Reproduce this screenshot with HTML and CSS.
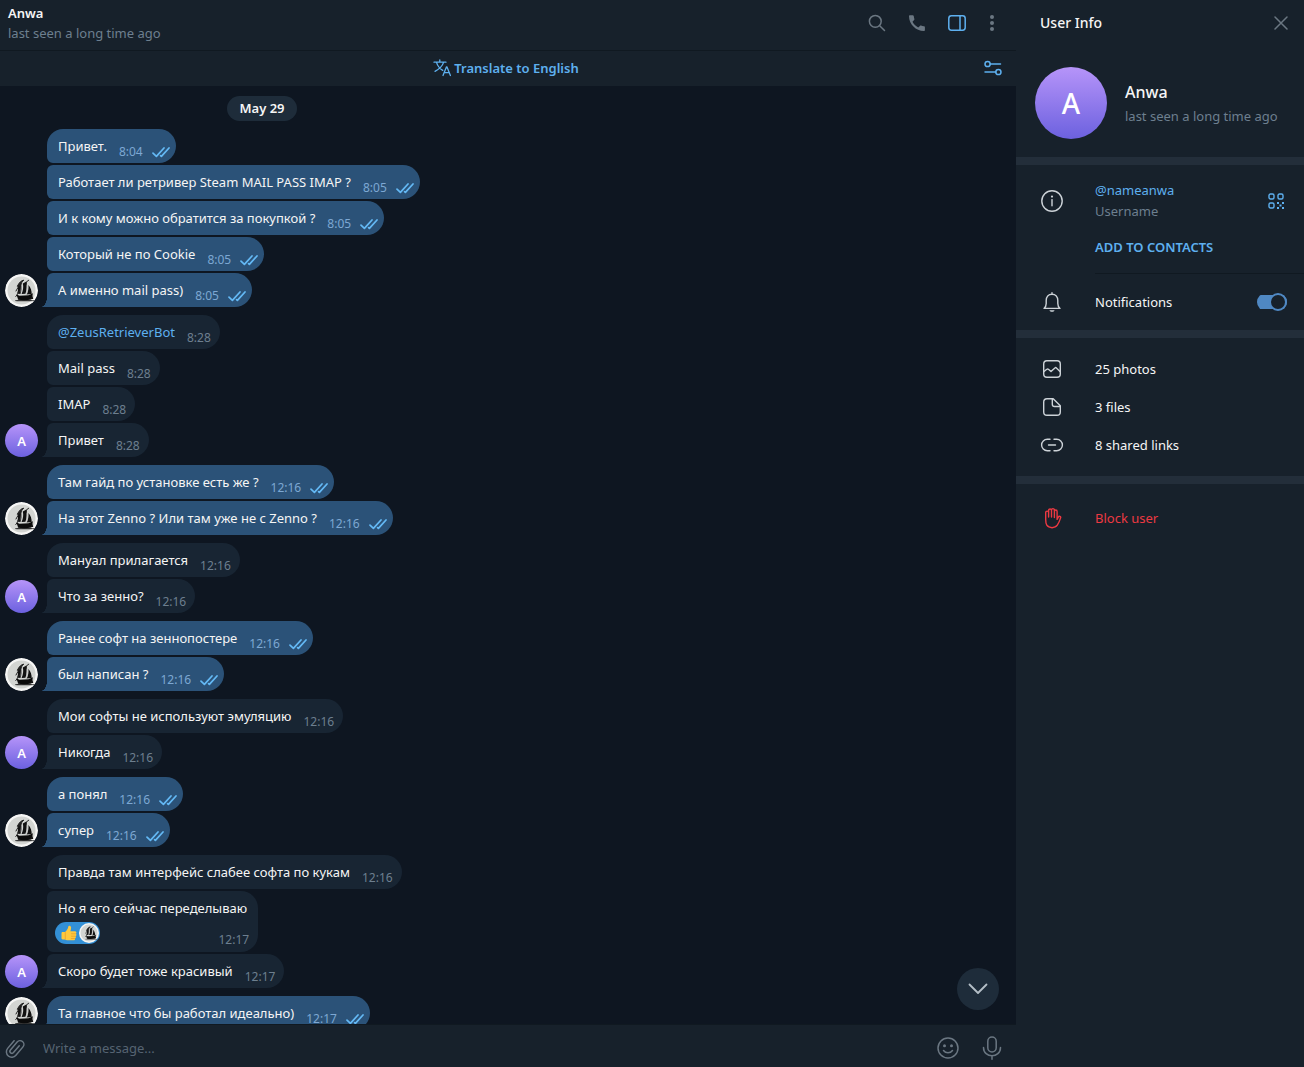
FILE: index.html
```html
<!DOCTYPE html>
<html lang="en">
<head>
<meta charset="utf-8">
<meta name="viewport" content="width=device-width, initial-scale=1">
<title>Anwa</title>
<link rel="stylesheet" href="styles.css">
</head>
<body>
<svg class="sprite" aria-hidden="true">
  <symbol id="ticks" viewBox="0 0 18 12"><path d="M1 7.2 4.4 10.400 12 2M8.600 9.600 9.400 10.400 17 2" fill="none" stroke="currentColor" stroke-width="1.700" stroke-linecap="round" stroke-linejoin="round"/></symbol>
  <symbol id="ship" viewBox="0 0 33 33">
    <circle cx="16.500" cy="16.500" r="16.500" fill="#f6f6f5"/>
    <circle cx="16.500" cy="16.500" r="14" fill="#d3d5d2"/>
    <path d="M10 26.500c4-1 9-1.200 16-.6 1.500.2 4 .4 5 .9-5 .6-15 .8-21 .1z" fill="#333"/>
    <path d="M11.500 20.500l3 1.200 9-.4 4.500-2-1.800 6.200c-4 1-9 1-13 .3z" fill="#0b0b0b"/>
    <path d="M12 19.500c1.500-3 1-6 .6-8l3.800-2.700c1 4 .2 8-1 11.200zM16.600 20c1.600-4 2-7 1.200-10.500l4-2.200c.2 4.200 0 9-1.400 12.500zM21.600 20.500c1.600-3 2.200-6 1.800-9.500 2.400 2.600 3.400 6 3.300 9zM24.500 25c1.200-1 2.500-2 2.500-4.500l1.300 4.500z" fill="#111"/>
    <path d="M12.500 12c1.500-3.500 3.800-5.500 6.300-5.800-1.800 1.500-2.600 3-3.400 5zM11 17l2-3.500M10.800 22.500l5-7M22 7.500l1.600-1.200" fill="#222" stroke="#222" stroke-width="1"/>
    <path d="M16.500 11l-.5 7M22 11v8" stroke="#bbb" stroke-width=".7"/>
  </symbol>
</svg>
<div class="app">
  <main class="chat">
    <header class="chat-head">
      <div class="chat-title">
        <h1>Anwa</h1>
        <p class="muted">last seen a long time ago</p>
      </div>
      <nav class="tools">
        <button class="tool" aria-label="Search"><svg width="18" height="18" viewBox="0 0 18 18"><circle cx="7.300" cy="7.300" r="5.900"/><path d="M11.700 11.700 16.500 16.500"/></svg></button>
        <button class="tool" aria-label="Call"><svg class="solid" width="18" height="18" viewBox="0 0 18 18"><path d="M2 1.200h2.700c.6 0 1 .4 1.100 1 .1 1 .3 1.900.6 2.800.1.400 0 .8-.3 1.100L4.500 7.800c1.200 2.300 3.300 4.400 5.700 5.700l1.700-1.600c.3-.3.700-.4 1.100-.3.900.3 1.900.5 2.900.6.600 0 1 .5 1 1v2.700c0 .6-.5 1-1 1C7.800 16.900 1.100 10.200 1 2.200c0-.6.400-1 1-1z"/></svg></button>
        <button class="tool tool-active" aria-label="Toggle user info"><svg width="18" height="16" viewBox="0 0 18 16"><rect x=".8" y=".8" width="16.400" height="14.400" rx="2.600"/><path d="M12 1v14"/></svg></button>
        <button class="tool tool-narrow" aria-label="More"><svg class="solid" width="6" height="18" viewBox="0 0 6 18"><circle cx="3" cy="3" r="2"/><circle cx="3" cy="9" r="2"/><circle cx="3" cy="15" r="2"/></svg></button>
      </nav>
    </header>
    <div class="translate">
      <button class="translate-main">
        <svg width="18" height="18" viewBox="0 0 18 18"><path d="M1 3.200h12M6.800 1v2.200M3.500 3.400c1 3.300 3.300 6.200 6.200 8M10.600 3.400C9.400 7 6.500 10 2 12.300M10 16.500 13.500 7.800h.4l3.500 8.700M11.200 13.700h5"/></svg>
        Translate to English
      </button>
      <button class="tool tool-active tool-narrow translate-options" aria-label="Translation settings"><svg width="18" height="16" viewBox="0 0 18 16"><circle cx="3.600" cy="4" r="2.600"/><path d="M6.200 4H16.500M1 12h10.800"/><circle cx="14.400" cy="12" r="2.600"/></svg></button>
    </div>
    <section class="history" aria-label="Messages">
      <div class="column">
        <time class="day">May 29</time>

        <div class="group mine">
          <svg class="avatar"><use href="#ship"/></svg>
          <div class="bubble"><p>Привет.</p><span class="meta">8:04<svg><use href="#ticks"/></svg></span></div>
          <div class="bubble"><p>Работает ли ретривер Steam MAIL PASS IMAP ?</p><span class="meta">8:05<svg><use href="#ticks"/></svg></span></div>
          <div class="bubble"><p>И к кому можно обратится за покупкой ?</p><span class="meta">8:05<svg><use href="#ticks"/></svg></span></div>
          <div class="bubble"><p>Который не по Cookie</p><span class="meta">8:05<svg><use href="#ticks"/></svg></span></div>
          <div class="bubble"><p>А именно mail pass)</p><span class="meta">8:05<svg><use href="#ticks"/></svg></span></div>
        </div>

        <div class="group">
          <span class="avatar initial">A</span>
          <div class="bubble"><p><a href="#bot">@ZeusRetrieverBot</a></p><span class="meta">8:28</span></div>
          <div class="bubble"><p>Mail pass</p><span class="meta">8:28</span></div>
          <div class="bubble"><p>IMAP</p><span class="meta">8:28</span></div>
          <div class="bubble"><p>Привет</p><span class="meta">8:28</span></div>
        </div>

        <div class="group mine">
          <svg class="avatar"><use href="#ship"/></svg>
          <div class="bubble"><p>Там гайд по установке есть же ?</p><span class="meta">12:16<svg><use href="#ticks"/></svg></span></div>
          <div class="bubble"><p>На этот Zenno ? Или там уже не с Zenno ?</p><span class="meta">12:16<svg><use href="#ticks"/></svg></span></div>
        </div>

        <div class="group">
          <span class="avatar initial">A</span>
          <div class="bubble"><p>Мануал прилагается</p><span class="meta">12:16</span></div>
          <div class="bubble"><p>Что за зенно?</p><span class="meta">12:16</span></div>
        </div>

        <div class="group mine">
          <svg class="avatar"><use href="#ship"/></svg>
          <div class="bubble"><p>Ранее софт на зеннопостере</p><span class="meta">12:16<svg><use href="#ticks"/></svg></span></div>
          <div class="bubble"><p>был написан ?</p><span class="meta">12:16<svg><use href="#ticks"/></svg></span></div>
        </div>

        <div class="group">
          <span class="avatar initial">A</span>
          <div class="bubble"><p>Мои софты не используют эмуляцию</p><span class="meta">12:16</span></div>
          <div class="bubble"><p>Никогда</p><span class="meta">12:16</span></div>
        </div>

        <div class="group mine">
          <svg class="avatar"><use href="#ship"/></svg>
          <div class="bubble"><p>а понял</p><span class="meta">12:16<svg><use href="#ticks"/></svg></span></div>
          <div class="bubble"><p>супер</p><span class="meta">12:16<svg><use href="#ticks"/></svg></span></div>
        </div>

        <div class="group">
          <span class="avatar initial">A</span>
          <div class="bubble"><p>Правда там интерфейс слабее софта по кукам</p><span class="meta">12:16</span></div>
          <div class="bubble bubble-stacked">
            <p>Но я его сейчас переделываю</p>
            <div class="reactions">
              <button class="reaction" aria-label="Thumbs up">
                <svg width="18" height="18" viewBox="0 0 18 18"><path d="M1.500 9.200c0-.8.5-1.200 1.200-1.200H5c1.700-1.300 3-3.200 3.300-5.500.2-1.300 2.600-1.200 2.800.8.100 1.400-.3 2.700-.7 3.900h4.300c2 0 2.200 2 .9 2.500 1.300.5 1.100 2.300-.2 2.500.9.600.6 2-.5 2.200.5.900-.1 1.900-1.300 1.900H7.800c-1.300 0-2-.5-2.800-.9H2.700c-.7 0-1.200-.4-1.200-1.100z" fill="#ffc83d"/><path d="M11.500 9.800h3.800M11.500 12.200h3.500M11.300 14.500h3.200M5.300 8.500v6.300" fill="none" stroke="#e59b25" stroke-width=".7"/></svg>
                <svg width="20" height="20"><use href="#ship"/></svg>
              </button>
              <span class="time">12:17</span>
            </div>
          </div>
          <div class="bubble"><p>Скоро будет тоже красивый</p><span class="meta">12:17</span></div>
        </div>

        <div class="group mine">
          <svg class="avatar"><use href="#ship"/></svg>
          <div class="bubble"><p>Та главное что бы работал идеально)</p><span class="meta">12:17<svg><use href="#ticks"/></svg></span></div>
        </div>
      </div>
      <button class="to-bottom" aria-label="Scroll to bottom"><svg width="20" height="12" viewBox="0 0 20 12"><path d="M1.500 1.500 10 10l8.500-8.500"/></svg></button>
    </section>
    <footer class="composer">
      <button class="tool tool-narrow" aria-label="Attach"><svg width="22" height="24" viewBox="-11 -12 22 24"><path transform="rotate(40)" d="M-5.400-5V5a5.400 5.400 0 0 0 10.800 0V-6a3.800 3.800 0 0 0-7.600 0V4.500a2 2 0 0 0 4 0V-4.500"/></svg></button>
      <input type="text" placeholder="Write a message..." aria-label="Message">
      <button class="tool" aria-label="Emoji"><svg width="22" height="22" viewBox="0 0 22 22"><circle cx="11" cy="11" r="10"/><circle class="dot" cx="7.500" cy="8.800" r="1.500"/><circle class="dot" cx="14.500" cy="8.800" r="1.500"/><path d="M6.500 13.500c2.200 3 6.800 3 9 0"/></svg></button>
      <button class="tool tool-mic" aria-label="Record voice message"><svg width="20" height="24" viewBox="0 0 20 24"><rect x="5.800" y="1" width="8.400" height="15" rx="4.200"/><path d="M1.500 11.500c0 11 17 11 17 0M10 20v3.200"/></svg></button>
    </footer>
  </main>

  <aside class="info">
    <header class="info-head">
      <h2>User Info</h2>
      <button class="tool tool-narrow" aria-label="Close"><svg width="14" height="14" viewBox="0 0 14 14"><path d="M1 1l12 12M13 1 1 13"/></svg></button>
    </header>
    <div class="profile">
      <span class="portrait">A</span>
      <div>
        <h3>Anwa</h3>
        <p class="muted">last seen a long time ago</p>
      </div>
    </div>
    <section class="block">
      <div class="row row-user">
        <svg width="24" height="24" viewBox="0 0 24 24"><circle cx="12" cy="12" r="10.200"/><path d="M12 10.600v6.200"/><circle class="dot" cx="12" cy="7.600" r="1.100"/></svg>
        <div>
          <a href="#username">@nameanwa</a>
          <p class="muted">Username</p>
        </div>
        <button class="tool tool-active qr" aria-label="QR code"><svg width="16" height="16" viewBox="0 0 16 16"><rect x="1" y="1" width="5" height="5" rx="1.500"/><rect x="10" y="1" width="5" height="5" rx="1.500"/><rect x="1" y="10" width="5" height="5" rx="1.500"/><path class="dot" d="M9 9h2v2H9zM14 9h2v2h-2zM11.500 11.500h2v2h-2zM9 14h2v2H9zM14 14h2v2h-2z"/></svg></button>
      </div>
      <button class="add">ADD TO CONTACTS</button>
      <label class="row row-notify">
        <svg width="24" height="24" viewBox="0 0 24 24"><path d="M4 18.400h16c-1.700-1.500-2.200-3-2.200-5v-2.900c0-3.500-2.200-6.300-5.800-6.300s-5.800 2.800-5.800 6.300v2.900c0 2-.5 3.500-2.200 5zM12 2.800v1.400"/><path class="dot" d="M9.500 20.200h5c-.5 2-4.500 2-5 0z"/></svg>
        <span>Notifications</span>
        <input class="switch" type="checkbox" checked>
      </label>
    </section>
    <section class="block block-media">
      <button class="row"><svg width="24" height="24" viewBox="0 0 24 24"><rect x="3.700" y="3.700" width="16.600" height="16.600" rx="3.200"/><path d="M4 14.500l2.800-2.200c.6-.5 1-.4 1.600 0l2.600 2.200 3.900-3.600c.5-.5 1-.5 1.500 0l3.600 3.500"/></svg>25 photos</button>
      <button class="row"><svg width="24" height="24" viewBox="0 0 24 24"><path d="M7 3.700h6.200l7.100 7V17c0 2-1.300 3.300-3.300 3.300H7c-2 0-3.300-1.300-3.300-3.300V7c0-2 1.300-3.300 3.300-3.300zM12.300 4v5.300c0 1.400.8 2.200 2.200 2.200h5.500"/></svg>3 files</button>
      <button class="row"><svg width="24" height="24" viewBox="0 0 24 24"><path d="M10 6.300H7.300a5.700 5.700 0 0 0 0 11.400H10M14 6.300h2.700a5.700 5.700 0 0 1 0 11.400H14M8.500 12h7"/></svg>8 shared links</button>
    </section>
    <section class="block block-danger">
      <button class="row danger"><svg width="24" height="24" viewBox="0 0 24 24"><path d="M5.700 13V6.600c0-1.900 2.900-1.900 2.900 0V11M8.600 6.600V4.400c0-1.900 2.900-1.900 2.900 0V11M11.500 4.400c0-2.400 2.900-2.400 2.900 0V11.500M14.400 5.400c0-1.800 2.700-1.800 2.700 0v8l1.200-2.300c.8-1.500 2.800-.8 2.300.8-.8 2.500-1.900 5.200-3.300 7.300-2.300 3.300-8.300 3.300-10.500 0-1.200-1.800-1.100-3.900-1.100-6.200"/></svg>Block user</button>
    </section>
  </aside>
</div>
</body>
</html>
```

FILE: styles.css
```css
:root {
  --panel: #17212b;
  --bg: #0e1621;
  --line: #101921;
  --band: #232e3a;
  --incoming: #182533;
  --outgoing: #2b5278;
  --text: #f5f5f5;
  --muted: #6d7f8f;
  --icon: #6b7782;
  --accent: #5eb0ef;
}

*, *::before { box-sizing: border-box; }

body {
  margin: 0;
  background: var(--bg);
  color: var(--text);
  font: 13px/20px "Noto Sans", "Open Sans", sans-serif;
}

h1, h2, h3, p { margin: 0; font-size: 13px; font-weight: 600; }
p { font-weight: 400; }
a { color: var(--accent); text-decoration: none; }

button {
  padding: 0;
  border: 0;
  background: none;
  color: inherit;
  font: inherit;
  text-align: left;
  cursor: pointer;
}

svg {
  flex: none;
  fill: none;
  stroke: currentColor;
  stroke-width: 1.5;
  stroke-linecap: round;
  stroke-linejoin: round;
}

.sprite { display: none; }
.solid, .dot { fill: currentColor; stroke: none; }
.muted { color: var(--muted); }

.app {
  display: grid;
  grid-template-columns: minmax(0, 1fr) 288px;
  height: 100vh;
}

.chat {
  display: flex;
  flex-direction: column;
  min-height: 0;
}

.chat-head {
  display: flex;
  align-items: center;
  justify-content: space-between;
  padding: 3px 9px 7px 8px;
  background: var(--panel);
  border-bottom: 1px solid var(--line);
}

.tools { display: flex; }

.tool {
  display: flex;
  align-items: center;
  justify-content: center;
  width: 40px;
  height: 32px;
  color: var(--icon);
}

.tool-active { color: var(--accent); }
.tool-narrow { width: 30px; }

.translate {
  display: grid;
  grid-template-columns: 30px 1fr 30px;
  align-items: center;
  height: 35px;
  padding: 0 8px 2px 4px;
  background: var(--panel);
}

.translate-main {
  display: flex;
  grid-column: 2;
  align-items: center;
  justify-content: center;
  gap: 3px;
  color: var(--accent);
  font-weight: 600;
}

.translate-main svg { stroke-width: 1.300; }

.history {
  position: relative;
  flex: 1;
  min-height: 0;
  overflow: hidden;
}

.column {
  display: flex;
  flex-direction: column;
  gap: 8px;
  max-width: 524px;
  padding-top: 10px;
}

.day {
  align-self: center;
  padding: 2px 12px 3px;
  border-radius: 13px;
  background: #1e2c3a;
  font-weight: 600;
}

.group {
  position: relative;
  display: flex;
  flex-direction: column;
  align-items: flex-start;
  gap: 2px;
  padding-left: 47px;
}

.avatar {
  position: absolute;
  bottom: 0;
  left: 5px;
  width: 33px;
  height: 33px;
  border-radius: 50%;
}

.avatar, .reaction svg { stroke: none; }

.initial, .portrait {
  display: flex;
  align-items: center;
  justify-content: center;
  border-radius: 50%;
  background: linear-gradient(#b694f9, #6c61df);
  color: #fff;
  font-weight: 600;
}

.bubble {
  position: relative;
  display: flex;
  align-items: center;
  gap: 12px;
  min-height: 34px;
  padding: 0 9px 0 11px;
  border-radius: 6px 17px 17px 6px;
  background: var(--incoming);
}

.mine .bubble {
  padding-right: 6px;
  background: var(--outgoing);
}

.group .avatar + .bubble { border-top-left-radius: 16px; }
.group .bubble:last-child { border-bottom-left-radius: 0; }

.bubble:last-child::before {
  content: "";
  position: absolute;
  bottom: 0;
  left: -6px;
  width: 6px;
  height: 10px;
  background: radial-gradient(ellipse 6px 10px at 0 0, transparent 96%, var(--incoming) 100%);
}

.mine .bubble:last-child::before {
  background: radial-gradient(ellipse 6px 10px at 0 0, transparent 96%, var(--outgoing) 100%);
}

.meta, .time {
  color: #6d7f8f;
  font-size: 12px;
  line-height: 16px;
}

.meta {
  display: flex;
  align-items: center;
  gap: 9px;
  padding-top: 11px;
  line-height: 12px;
}

.mine .meta { color: #7da8d3; }
.meta svg { width: 18px; height: 12px; color: #64b9f5; }

.bubble-stacked {
  flex-direction: column;
  align-items: stretch;
  gap: 4px;
  padding: 7px 11px 4px;
}

.reactions {
  display: flex;
  align-items: flex-end;
  justify-content: space-between;
  height: 26px;
  margin: 0 -2px 0 -3px;
}

.reaction {
  display: flex;
  align-items: center;
  align-self: flex-start;
  gap: 1px;
  height: 22px;
  padding: 0 1px 0 5px;
  border-radius: 11px;
  background: #3390d6;
}

.to-bottom {
  position: absolute;
  right: 17px;
  bottom: 14px;
  display: flex;
  align-items: center;
  justify-content: center;
  width: 42px;
  height: 42px;
  border-radius: 50%;
  background: #1e2c3a;
  color: #b4bec7;
}

.to-bottom svg { stroke-width: 1.800; }

.composer {
  display: flex;
  align-items: center;
  height: 43px;
  padding-top: 3px;
  background: var(--panel);
  border-top: 1px solid var(--line);
}

.composer input {
  flex: 1;
  min-width: 0;
  padding: 0 13px;
  border: 0;
  outline: 0;
  background: none;
  color: var(--text);
  font: inherit;
}

.composer input::placeholder { color: #566472; opacity: 1; }
.tool-mic { width: 48px; }

.info {
  overflow: hidden;
  background: var(--panel);
}

.info-head {
  display: flex;
  align-items: center;
  justify-content: space-between;
  height: 46px;
  padding: 0 8px 0 24px;
}

.info-head h2 { font-size: 14px; font-weight: 500; }

.profile {
  display: flex;
  align-items: center;
  gap: 18px;
  padding: 21px 19px 18px;
}

.profile h3 { font-size: 16px; font-weight: 500; line-height: 24px; }
.profile p { padding-top: 2px; }

.portrait {
  width: 72px;
  height: 72px;
  font-size: 28px;
  font-weight: 500;
}

.block { border-top: 8px solid var(--band); }
.block-media { padding: 12px 0; }
.block-danger { padding-top: 15px; }

.row {
  display: grid;
  grid-template-columns: 24px 1fr auto;
  align-items: center;
  column-gap: 31px;
  width: 100%;
  min-height: 38px;
  padding: 0 17px 0 24px;
}

.row svg { stroke-width: 1.400; }
.row > svg { color: #cdd3d8; }
.row-user { padding-top: 15px; }
.row-user p { padding-top: 1px; }
.qr { width: 22px; }

.add {
  display: block;
  margin: 16px 0 15px 79px;
  color: var(--accent);
  font-weight: 600;
}

.row-notify {
  min-height: 58px;
  padding-top: 2px;
  background: linear-gradient(var(--line), var(--line)) 79px 1px / 100% 1px no-repeat;
}

.switch {
  appearance: none;
  display: flex;
  align-items: center;
  justify-content: flex-end;
  width: 30px;
  height: 18px;
  margin: 0;
  background: linear-gradient(#4f88c3, #4f88c3) center / 100% 14px no-repeat;
  border-radius: 9px;
}

.switch::before {
  content: "";
  width: 18px;
  height: 18px;
  border: 2px solid #4f88c3;
  border-radius: 50%;
  background: var(--panel);
}

.switch:not(:checked) { justify-content: flex-start; }

.danger, .danger > svg { color: #ec3942; }
```
